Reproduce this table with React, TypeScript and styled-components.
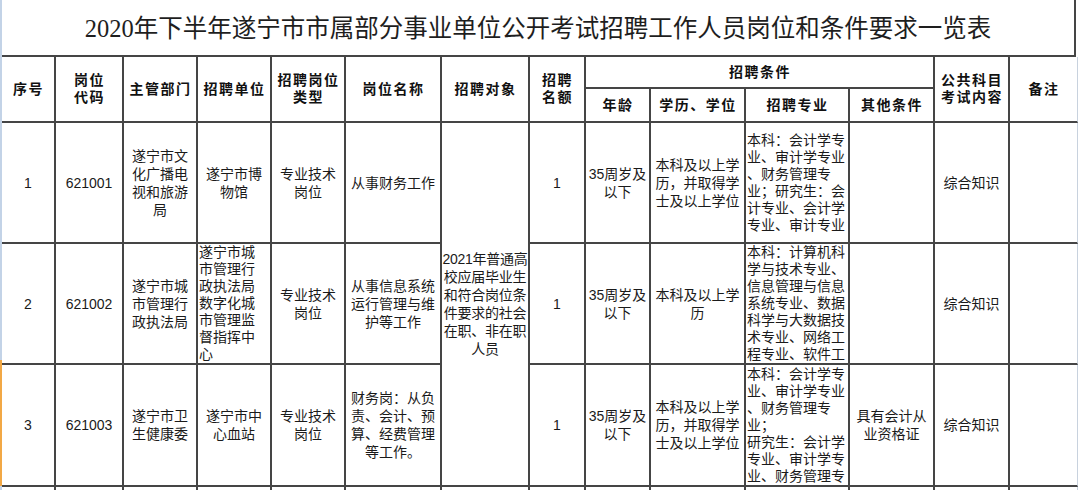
import React from 'react'
import styled, { createGlobalStyle } from 'styled-components'

const GlobalStyle = createGlobalStyle`
  html, body {
    margin: 0;
    padding: 0;
    background: #fff;
  }
  body {
    font-family: "Liberation Sans", "Noto Sans CJK SC", sans-serif;
  }
`

type RowData = {
  no: string
  code: string
  dept: string[]
  unit: string[]
  unitLeft?: boolean
  kind: string[]
  name: string[]
  count: string
  age: string[]
  edu: string[]
  major: string[]
  other: string[]
  exam: string
}

const rows: RowData[] = [
  {
    no: '1',
    code: '621001',
    dept: ['遂宁市文', '化广播电', '视和旅游', '局'],
    unit: ['遂宁市博', '物馆'],
    kind: ['专业技术', '岗位'],
    name: ['从事财务工作'],
    count: '1',
    age: ['35周岁及', '以下'],
    edu: ['本科及以上学', '历，并取得学', '士及以上学位'],
    major: ['本科：会计学专', '业、审计学专业', '、财务管理专', '业；研究生：会', '计专业、会计学', '专业、审计专业'],
    other: [],
    exam: '综合知识',
  },
  {
    no: '2',
    code: '621002',
    dept: ['遂宁市城', '市管理行', '政执法局'],
    unit: ['遂宁市城', '市管理行', '政执法局', '数字化城', '市管理监', '督指挥中', '心'],
    unitLeft: true,
    kind: ['专业技术', '岗位'],
    name: ['从事信息系统', '运行管理与维', '护等工作'],
    count: '1',
    age: ['35周岁及', '以下'],
    edu: ['本科及以上学', '历'],
    major: ['本科：计算机科', '学与技术专业、', '信息管理与信息', '系统专业、数据', '科学与大数据技', '术专业、网络工', '程专业、软件工'],
    other: [],
    exam: '综合知识',
  },
  {
    no: '3',
    code: '621003',
    dept: ['遂宁市卫', '生健康委'],
    unit: ['遂宁市中', '心血站'],
    kind: ['专业技术', '岗位'],
    name: ['财务岗：从负', '责、会计、预', '算、经费管理', '等工作。'],
    count: '1',
    age: ['35周岁及', '以下'],
    edu: ['本科及以上学', '历，并取得学', '士及以上学位'],
    major: ['本科：会计学专', '业、审计学专业', '、财务管理专', '业；', '研究生：会计学', '专业、审计学专', '业、财务管理专'],
    other: ['具有会计从', '业资格证'],
    exam: '综合知识',
  },
]

const target = ['2021年普通高', '校应届毕业生', '和符合岗位条', '件要求的社会', '在职、非在职', '人员']

const Lines: React.FC<{ lines: string[] }> = ({ lines }) => (
  <>
    {lines.map((l, i) => (
      <Line key={i}>{l}</Line>
    ))}
  </>
)

const App: React.FC = () => {
  return (
    <Page>
      <GlobalStyle />
      <Gutter />
      <Sheet>
        <Title>2020年下半年遂宁市市属部分事业单位公开考试招聘工作人员岗位和条件要求一览表</Title>
        <Grid>
          <Head $rows={2}>序号</Head>
          <Head $rows={2}>
            <Lines lines={['岗位', '代码']} />
          </Head>
          <Head $rows={2}>主管部门</Head>
          <Head $rows={2}>招聘单位</Head>
          <Head $rows={2}>
            <Lines lines={['招聘岗位', '类型']} />
          </Head>
          <Head $rows={2}>岗位名称</Head>
          <Head $rows={2}>招聘对象</Head>
          <Head $rows={2}>
            <Lines lines={['招聘', '名额']} />
          </Head>
          <Head $cols={4}>招聘条件</Head>
          <Head $rows={2}>
            <Lines lines={['公共科目', '考试内容']} />
          </Head>
          <Head $rows={2} $light>
            备注
          </Head>
          <Head>年龄</Head>
          <Head>学历、学位</Head>
          <Head>招聘专业</Head>
          <Head>其他条件</Head>

          {rows.map((r, i) => (
            <React.Fragment key={r.no}>
              <Cell>{r.no}</Cell>
              <Cell>{r.code}</Cell>
              <Cell>
                <Lines lines={r.dept} />
              </Cell>
              <Cell $align={r.unitLeft ? 'left' : 'center'} $lh={r.unitLeft ? 17 : 18}>
                <Lines lines={r.unit} />
              </Cell>
              <Cell>
                <Lines lines={r.kind} />
              </Cell>
              <Cell>
                <Lines lines={r.name} />
              </Cell>
              {i === 0 && (
                <Cell $rows={3} $tight>
                  <Lines lines={target} />
                </Cell>
              )}
              <Cell>{r.count}</Cell>
              <Cell>
                <Lines lines={r.age} />
              </Cell>
              <Cell>
                <Lines lines={r.edu} />
              </Cell>
              <Cell $align="left" $lh={17}>
                <Lines lines={r.major} />
              </Cell>
              <Cell>
                <Lines lines={r.other} />
              </Cell>
              <Cell>{r.exam}</Cell>
              <Cell $light />
            </React.Fragment>
          ))}

          {Array.from({ length: 14 }).map((_, i) => (
            <Filler key={i} $light={i === 13} />
          ))}
        </Grid>
      </Sheet>
    </Page>
  )
}

const Page = styled.div`
  display: flex;
  width: 1080px;
  height: 490px;
  overflow: hidden;
  background: #fff;
`

const Gutter = styled.div`
  flex: 0 0 2px;
  background: linear-gradient(
    to bottom,
    #c3d3e7 0,
    #c3d3e7 360px,
    #f2a845 360px,
    #f2a845 486px,
    #c3d3e7 486px
  );
`

const Sheet = styled.div`
  display: flex;
  flex-direction: column;
  width: 1076px;
  overflow: hidden;
`

const Title = styled.div`
  flex: 0 0 57px;
  box-sizing: border-box;
  width: 1074px;
  height: 57px;
  border-right: 2px solid #454545;
  border-bottom: 2px solid #454545;
  display: flex;
  align-items: center;
  justify-content: center;
  padding-bottom: 2px;
  font-family: "Liberation Serif", "Noto Sans CJK SC", serif;
  font-size: 24.5px;
  color: #1e1e1e;
`

const Grid = styled.div`
  flex: 0 0 auto;
  display: grid;
  grid-template-columns: 54px 68px 74px 74px 74px 96px 88px 56px 65px 95px 104px 85px 75px 68px;
  grid-template-rows: 32px 34px 121px 121px 122px 40px;
`

type CellProps = {
  $rows?: number
  $cols?: number
  $align?: 'left' | 'center'
  $lh?: number
  $light?: boolean
  $tight?: boolean
}

const Cell = styled.div<CellProps>`
  grid-row: span ${(p) => p.$rows ?? 1};
  grid-column: span ${(p) => p.$cols ?? 1};
  box-sizing: border-box;
  border-right: ${(p) => (p.$light ? '1px solid #c8d2de' : '2px solid #454545')};
  border-bottom: 2px solid #454545;
  display: flex;
  flex-direction: column;
  justify-content: center;
  align-items: ${(p) => (p.$align === 'left' ? 'flex-start' : 'center')};
  text-align: ${(p) => p.$align ?? 'center'};
  padding: 0 1px;
  overflow: hidden;
  font-size: 14px;
  line-height: ${(p) => p.$lh ?? 18}px;
  letter-spacing: ${(p) => (p.$tight ? '-0.25px' : '0')};
  color: #1a1a1a;
`

const Head = styled(Cell)`
  font-weight: 700;
  letter-spacing: 1.5px;
  padding-left: 2px;
  line-height: 17px;
  color: #111;
`

const Filler = styled(Cell)`
  border-bottom: none;
`

const Line = styled.div`
  white-space: nowrap;
`

export default App
